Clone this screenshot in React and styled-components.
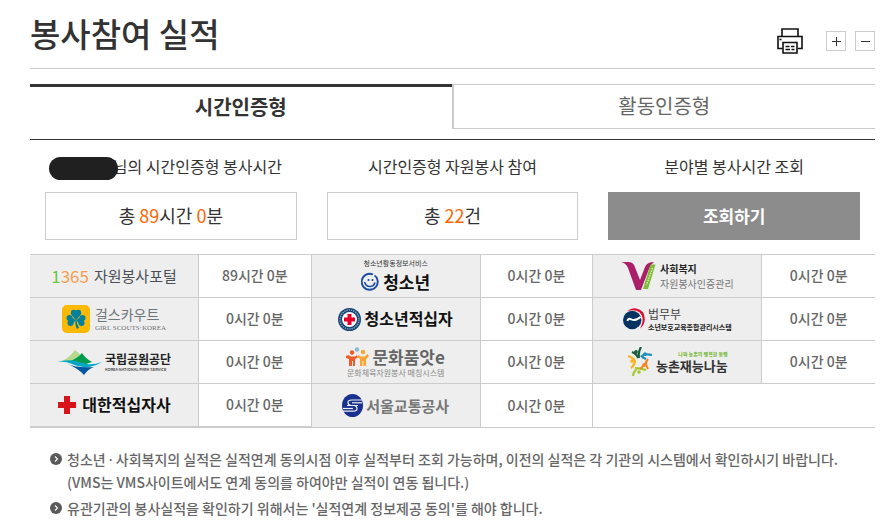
import React from 'react'
import { useState } from 'react';
import styled, { createGlobalStyle } from 'styled-components'


const PrinterIcon = () => (
  <svg width="26" height="26" viewBox="0 0 26 26" fill="none" stroke="#111" strokeWidth="1.6">
    <path d="M5 8V1h16v7" />
    <path d="M5.5 20.500H1V8.500h24v12h-4.500" />
    <path d="M6 14.500h14V25H6z" />
    <path d="M8.500 18.500h4M14 18.500h3.500M8.500 21.500h4.500M14.500 21.500h3" strokeWidth="1.500" />
    <path d="M2.500 11.500h2" />
  </svg>
)

const ScoutIcon = () => (
  <svg width="28" height="28" viewBox="0 0 28 28">
    <rect width="28" height="28" rx="5" fill="#fcb900" />
    <g fill="#00809f">
      <circle cx="11.800" cy="7.800" r="3" />
      <circle cx="16.200" cy="7.800" r="3" />
      <path d="M9.200 9.500h9.600L14 15.500z" />
      <circle cx="7.500" cy="13" r="3" />
      <circle cx="8.500" cy="18" r="3" />
      <path d="M7 10.200L13.500 15 10 20.500z" />
      <circle cx="20.500" cy="13" r="3" />
      <circle cx="19.500" cy="18" r="3" />
      <path d="M21 10.200L14.500 15l3.500 5.500z" />
      <path d="M13.300 15h1.400q0 5 2.300 7.500l-2 1.500q-2-3-1.700-9z" />
    </g>
  </svg>
)

const ParkIcon = () => (
  <svg width="45" height="26" viewBox="0 0 45 26">
    <path d="M5 12Q12 9 18 1l13 11z" fill="#b5d88d" />
    <path d="M11 13Q20 10 25 4q4 6 10 9l-6 2z" fill="#009b4c" />
    <path d="M0 13q14-4 25 1 9 3 20-1-6 4-13 5-9 1-17-3-6-3-15-2z" fill="#00a7c7" />
    <path d="M10 14.500q10 5 27 3.500Q31 20 27 26 22 20 10 14.500z" fill="#00579f" />
  </svg>
)

const CrossIcon = () => (
  <svg width="20" height="20" viewBox="0 0 20 20">
    <path d="M7 1h6v6h6v6h-6v6H7v-6H1V7h6z" fill="#d7141a" />
  </svg>
)

const SmileIcon = () => (
  <svg width="18" height="20" viewBox="0 0 18 20" fill="none" stroke="#1c4da1" strokeWidth="1.900">
    <path d="M12 2.500A8 8 0 1 0 16.500 8q-.5-3-3-4.500" />
    <path d="M3.500 10q1.500 5 6 4.500 3.500-.500 4.500-4" strokeWidth="1.600" />
    <path d="M7.500 7v2M11.500 7v2" strokeWidth="1.600" />
  </svg>
)

const YouthCrossIcon = () => (
  <svg width="23" height="23" viewBox="0 0 23 23">
    <circle cx="11.500" cy="11.500" r="11.500" fill="#174673" />
    <circle cx="11.500" cy="11.500" r="9.500" fill="none" stroke="#8aa4bc" strokeWidth="1.400" strokeDasharray="1.300 1" />
    <circle cx="11.500" cy="11.500" r="7.500" fill="#fff" />
    <path d="M9.500 6h4v3.500H17v4h-3.500V17h-4v-3.500H6v-4h3.500z" fill="#e60028" />
  </svg>
)

const CultureIcon = () => (
  <svg width="23" height="20" viewBox="0 0 23 20">
    <circle cx="11" cy="2.500" r="2.200" fill="#8db9cb" />
    <circle cx="6" cy="5.500" r="2.200" fill="#f05a28" />
    <circle cx="17" cy="5" r="2.200" fill="#f9a533" />
    <path d="M0 9l2-1 3 1.500h4l2-1 1 2-3 1.500V19H7v-5H6v5H3v-7l-3-1z" fill="#f05a28" />
    <path d="M11 10l1-2 3 1.500h3.500L21.500 7 23 9l-3 3.500V19h-2.500v-5h-1v5H14v-7z" fill="#f9a533" />
  </svg>
)

const MetroIcon = () => (
  <svg width="21" height="23" viewBox="0 0 21 23">
    <ellipse cx="10.500" cy="11.500" rx="10.500" ry="11.500" fill="#18308f" />
    <g fill="none" stroke="#eee" strokeWidth="1.200">
      <path d="M21 6H9.500Q6 6 6 8.500T9 11.500h7" />
      <path d="M20 8.800H10" />
      <path d="M0 17.200h11.500q3.500 0 3.500-2.700T12 11.500H5" />
      <path d="M1 14.500h10" />
    </g>
  </svg>
)

const WelfareIcon = () => (
  <svg width="35" height="28" viewBox="0 0 35 28">
    <path d="M0 0h7q5 0 6.500 4L19 18 24 5q2-5 9-5-3 2-5 7l-8 21h-5L7 6Q5 1 0 0z" fill="#aa1f68" />
    <path d="M29.500 2.500h5L27 27h-5z" fill="#7fbc35" />
    <path d="M31.500 6l-6 17" stroke="#e1edcf" strokeWidth="1.200" strokeDasharray="1.500 1" />
  </svg>
)

const JusticeIcon = () => (
  <svg width="22" height="22" viewBox="0 0 22 22">
    <path d="M4 3Q8 0 12 0.200 22 1.500 21.800 11.500 21.500 17 17 20.500 20 15 19.500 10 18 2.500 10 2.300 7 2.200 4 3z" fill="#df0b2c" />
    <circle cx="9.200" cy="12" r="9.200" fill="#063361" />
    <path d="M4.500 13Q5 9.500 8.500 11.500T17.500 9" fill="none" stroke="#fff" strokeWidth="2" />
  </svg>
)

const FarmIcon = () => (
  <svg width="27" height="30" viewBox="0 0 27 30">
    <g fill="none" strokeWidth="2.200">
      <path d="M5 5q5 2 6 6M14 0q-3 5-2 11" stroke="#155f39" />
      <path d="M14 10q3-4 11-2M15 10l4 2" stroke="#1e90b7" />
      <path d="M1 9q6 2 7 5-1 5-4 7" stroke="#f6b21b" />
      <path d="M6 29q1-6 5-8M8 21q5 0 11 2" stroke="#a4c82c" />
      <path d="M21 12q-4 4 0 10M13 22q5-4 7-8" stroke="#f18a24" />
    </g>
    <circle cx="9" cy="5" r="1.900" fill="#155f39" />
    <circle cx="18" cy="7" r="1.800" fill="#1e90b7" />
    <circle cx="5" cy="14" r="1.800" fill="#f6b21b" />
    <circle cx="17" cy="18" r="1.900" fill="#f18a24" />
    <circle cx="12" cy="25" r="1.800" fill="#a4c82c" />
  </svg>
)

const BulletIcon = () => (
  <svg width="12" height="12" viewBox="0 0 12 12">
    <circle cx="6" cy="6" r="6" fill="#5a5a5a" />
    <path d="M5 3.500L7.500 6 5 8.500" fill="none" stroke="#fff" strokeWidth="1.100" />
  </svg>
)

const Portal = () => (
  <Logo>
    <Word size={17} color="#fa9d4c">
      <Tint color="#6cc644">1</Tint>365
    </Word>
    <Word size={15} color="#4a5058">자원봉사포털</Word>
  </Logo>
)

const Scout = () => (
  <Logo>
    <ScoutIcon />
    <Lines>
      <Word size={14} color="#6f7478">걸스카우트</Word>
      <SerifWord size={7} color="#6f7478">GIRL SCOUTS·KOREA</SerifWord>
    </Lines>
  </Logo>
)

const Park = () => (
  <Logo gap={3}>
    <ParkIcon />
    <Lines>
      <Word size={12} weight={700} color="#222">국립공원공단</Word>
      <Word size={4} weight={500} color="#333">KOREA NATIONAL PARK SERVICE</Word>
    </Lines>
  </Logo>
)

const RedCross = () => (
  <Logo>
    <CrossIcon />
    <Word size={16} weight={700} color="#111">대한적십자사</Word>
  </Logo>
)

const Youth = () => (
  <Lines center gap={0}>
    <Word size={7} leading={11} color="#333">청소년활동정보서비스</Word>
    <Logo gap={4}>
      <SmileIcon />
      <Word size={17} leading={25} weight={700} color="#111">청소년</Word>
    </Logo>
  </Lines>
)

const YouthCross = () => (
  <Logo gap={3}>
    <YouthCrossIcon />
    <Word size={16} weight={700} color="#111">청소년적십자</Word>
  </Logo>
)

const Culture = () => (
  <Lines center>
    <Logo gap={3}>
      <CultureIcon />
      <Word size={17} weight={700} color="#666">문화품앗e</Word>
    </Logo>
    <Word size={8} color="#888">문화체육자원봉사 매칭시스템</Word>
  </Lines>
)

const Metro = () => (
  <Logo gap={3}>
    <MetroIcon />
    <Word size={15} weight={700} color="#777">서울교통공사</Word>
  </Logo>
)

const Welfare = () => (
  <Logo gap={4}>
    <WelfareIcon />
    <Lines gap={0}>
      <Word size={10} leading={15} weight={700} color="#222">사회복지</Word>
      <Word size={10} leading={15} color="#777">자원봉사인증관리</Word>
    </Lines>
  </Logo>
)

const Justice = () => (
  <Logo gap={3}>
    <JusticeIcon />
    <Lines>
      <Word size={12} color="#444">법무부</Word>
      <Word size={7} weight={700} color="#222">소년보호교육종합관리시스템</Word>
    </Lines>
  </Logo>
)

const Farm = () => (
  <Logo gap={2}>
    <FarmIcon />
    <Lines end>
      <Word size={5} weight={700} color="#6fb52c">나와 농촌의 행복한 동행</Word>
      <Word size={13} weight={700} color="#333">농촌재능나눔</Word>
    </Lines>
  </Logo>
)

const rows = [
  [[Portal, "89시간 0분"], [Youth, "0시간 0분"], [Welfare, "0시간 0분"]],
  [[Scout, "0시간 0분"], [YouthCross, "0시간 0분"], [Justice, "0시간 0분"]],
  [[Park, "0시간 0분"], [Culture, "0시간 0분"], [Farm, "0시간 0분"]],
  [[RedCross, "0시간 0분"], [Metro, "0시간 0분"]],
];

const tabs = ["시간인증형", "활동인증형"];

const App = () => {
  const [active, setActive] = useState(0);

  return (
    <Page>
      <GlobalStyle />
      <Header>
        <Title>봉사참여 실적</Title>
        <Tools>
          <PrintButton type="button" aria-label="인쇄"><PrinterIcon /></PrintButton>
          <ZoomButton type="button" aria-label="확대">
            <svg width="9" height="9" viewBox="0 0 9 9" stroke="#333"><path d="M0 4.500h9M4.500 0v9" /></svg>
          </ZoomButton>
          <ZoomButton type="button" aria-label="축소">
            <svg width="9" height="9" viewBox="0 0 9 9" stroke="#333"><path d="M0 4.500h9" /></svg>
          </ZoomButton>
        </Tools>
      </Header>

      <Tabs role="tablist">
        {tabs.map((name, i) => (
          <Tab key={name} type="button" role="tab" aria-selected={active === i} $active={active === i} onClick={() => setActive(i)}>
            {name}
          </Tab>
        ))}
      </Tabs>

      <Summary>
        <Stat>
          <StatName><HiddenName />님의 시간인증형 봉사시간</StatName>
          <StatBox>총 <Num>89</Num>시간 <Num>0</Num>분</StatBox>
        </Stat>
        <Stat>
          <StatName>시간인증형 자원봉사 참여</StatName>
          <StatBox>총 <Num>22</Num>건</StatBox>
        </Stat>
        <Stat>
          <StatName>분야별 봉사시간 조회</StatName>
          <SearchButton type="button">조회하기</SearchButton>
        </Stat>
      </Summary>

      <Table>
        <colgroup>
          <LogoCol /><TimeCol /><LogoCol /><TimeCol /><LogoCol /><TimeCol />
        </colgroup>
        <tbody>
          {rows.map((row, i) => (
            <tr key={i}>
              {row.map(([Brand, time], j) => (
                <React.Fragment key={j}>
                  <LogoCell scope="row"><Brand /></LogoCell>
                  <TimeCell>{time}</TimeCell>
                </React.Fragment>
              ))}
              {row.length < 3 && <TimeCell colSpan={2} />}
            </tr>
          ))}
        </tbody>
      </Table>

      <Notes>
        <Note>
          <BulletIcon />
          <span>
            청소년 <Dot>·</Dot> 사회복지의 실적은 실적연계 동의시점 이후 실적부터 조회 가능하며, 이전의 실적은 각 기관의 시스템에서 확인하시기 바랍니다.
            <br />
            (VMS는 VMS사이트에서도 연계 동의를 하여야만 실적이 연동 됩니다.)
          </span>
        </Note>
        <Note>
          <BulletIcon />
          <span>유관기관의 봉사실적을 확인하기 위해서는 '실적연계 정보제공 동의'를 해야 합니다.</span>
        </Note>
      </Notes>
    </Page>
  )
}

export default App

const GlobalStyle = createGlobalStyle`
  * {
    box-sizing: border-box;
  }

  body {
    margin: 0;
    background-color: #fff;
    color: #333;
    font-family: "Noto Sans CJK KR", "Noto Sans", sans-serif;
  }

  button {
    padding: 0;
    font-family: inherit;
    cursor: pointer;
  }

  svg {
    display: block;
    flex-shrink: 0;
  }
`;

const Page = styled.main`
  padding: 13px 18px 8px 30px;
`;

const Header = styled.header`
  display: flex;
  justify-content: space-between;
  align-items: flex-start;
  height: 56px;
  border-bottom: 1px solid #ccc;
`;

const Title = styled.h1`
  margin: 0;
  font-size: 33px;
  line-height: 40px;
  font-weight: 500;
`;

const Tools = styled.div`
  display: flex;
  align-items: center;
  gap: 9px;
  padding-top: 15px;
`;

const PrintButton = styled.button`
  margin-right: 14px;
  border: none;
  background: none;
`;

const ZoomButton = styled.button`
  display: flex;
  align-items: center;
  justify-content: center;
  width: 20px;
  height: 20px;
  border: 1px solid #ccc;
  background-color: #fff;
`;

const Tabs = styled.div`
  display: flex;
  height: 45px;
  margin: 15px 0 10px;
`;

const Tab = styled.button`
  flex: 1;
  padding-bottom: ${(props) => (props.$active ? '4px' : '2px')};
  border: 0 solid #ccc;
  border-top: ${(props) => (props.$active ? '3px solid #333' : '1px solid #ccc')};
  border-bottom-width: ${(props) => (props.$active ? '0' : '1px')};
  border-left-width: ${(props) => (props.$active ? '0' : '2px')};
  background-color: #fff;
  color: ${(props) => (props.$active ? '#333' : '#666')};
  font-size: 20px;
  font-weight: ${(props) => (props.$active ? 700 : 400)};
`;

const Summary = styled.section`
  display: grid;
  grid-template-columns: repeat(3, 1fr);
  padding: 14px 0;
  border-top: 1px solid #333;
`;

const Stat = styled.div`
  padding: 0 15px;
`;

const StatName = styled.p`
  margin: 0 0 14px;
  font-size: 16px;
  line-height: 24px;
  text-align: center;
`;

const HiddenName = styled.span`
  position: relative;
  display: inline-block;
  width: 53px;

  &::after {
    content: "";
    position: absolute;
    left: -11px;
    right: -5px;
    bottom: -7px;
    height: 23px;
    border-radius: 12px;
    background-color: #202020;
  }
`;

const StatBox = styled.div`
  padding-bottom: 2px;
  border: 1px solid #ccc;
  font-size: 18px;
  line-height: 44px;
  text-align: center;
`;

const Num = styled.span`
  color: #f60;
`;

const SearchButton = styled.button`
  width: 100%;
  height: 48px;
  padding-bottom: 2px;
  border: none;
  background-color: #8c8c8c;
  color: #fff;
  font-size: 17px;
  font-weight: 700;
`;

const Table = styled.table`
  width: 100%;
  table-layout: fixed;
  border-spacing: 0;
  border-bottom: 1px solid #ccc;

  tr:last-child > * {
    height: 44px;
  }

  tr:last-child > :nth-child(-n + 2) {
    border-bottom: 1px solid #ccc;
  }
`;

const LogoCol = styled.col`
  width: 20%;
`;

const TimeCol = styled.col`
  width: 13.3333%;
`;

const LogoCell = styled.th`
  height: 43px;
  padding: 0;
  border-top: 1px solid #ccc;
  border-right: 1px solid #ccc;
  background-color: #eee;
  font-weight: 400;
`;

const TimeCell = styled.td`
  padding: 0 0 2px;
  border-top: 1px solid #ccc;
  border-right: 1px solid #ccc;
  color: #666;
  font-size: 14px;
  font-weight: 500;
  text-align: center;

  &:last-child {
    border-right: none;
  }
`;

const Logo = styled.span`
  display: flex;
  align-items: center;
  justify-content: center;
  gap: ${(props) => props.gap || 5}px;
`;

const Lines = styled.span`
  display: flex;
  flex-direction: column;
  align-items: ${(props) => (props.center ? 'center' : props.end ? 'flex-end' : 'flex-start')};
  gap: ${(props) => props.gap ?? 1}px;
`;

const Word = styled.span`
  color: ${(props) => props.color};
  font-size: ${(props) => props.size}px;
  font-weight: ${(props) => props.weight || 400};
  line-height: ${(props) => (props.leading ? `${props.leading}px` : 1.2)};
  white-space: nowrap;
`;

const SerifWord = styled(Word)`
  font-family: "Liberation Serif", serif;
`;

const Tint = styled.span`
  color: ${(props) => props.color};
`;

const Notes = styled.ul`
  margin: 0;
  padding: 20px 0 0 20px;
  list-style: none;
`;

const Note = styled.li`
  display: flex;
  gap: 5px;
  margin-bottom: 4px;
  color: #666;
  font-size: 14px;
  font-weight: 500;
  line-height: 22px;

  svg {
    margin-top: 5px;
  }
`;

const Dot = styled.span`
  font-family: "Noto Sans", sans-serif;
`;
